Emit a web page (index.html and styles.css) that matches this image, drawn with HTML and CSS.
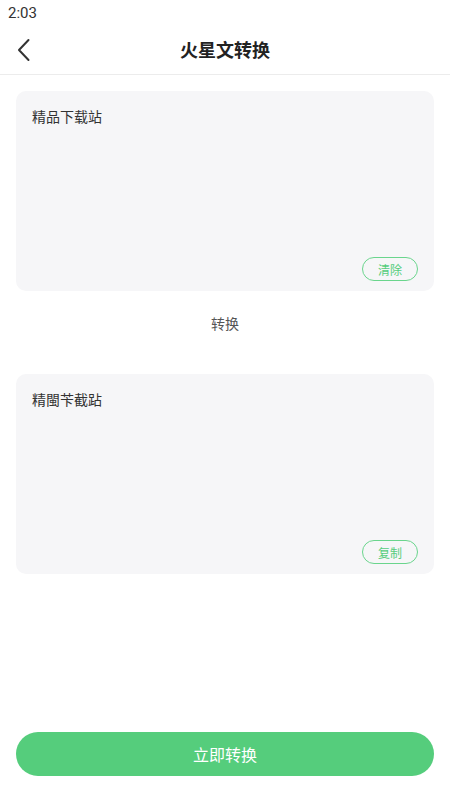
FILE: index.html
```html
<!DOCTYPE html>
<html lang="zh">
<head>
<meta charset="utf-8">
<meta name="viewport" content="width=device-width, initial-scale=1">
<title>火星文转换</title>
<link rel="stylesheet" href="styles.css">
</head>
<body>
<div class="page">
  <div class="status">2:03</div>
  <header class="nav">
    <span class="back">
      <svg width="16" height="24" viewBox="0 0 16 24"><path d="M12.5 2 L3 12 L12.5 22" fill="none" stroke="#333" stroke-width="2" stroke-linecap="round" stroke-linejoin="round"/></svg>
    </span>
    <h1 class="title">火星文转换</h1>
  </header>
  <main class="content">
    <section class="card">
      <div class="card-text">精品下载站</div>
      <button class="pill">清除</button>
    </section>
    <div class="mid">转换</div>
    <section class="card">
      <div class="card-text">精閩苄截跕</div>
      <button class="pill">复制</button>
    </section>
  </main>
  <button class="cta">立即转换</button>
</div>
</body>
</html>
```
FILE: styles.css
```css
* { box-sizing: border-box; }
html, body { margin: 0; padding: 0; background: #fff; }
body { font-family: "Noto Sans CJK SC", "Noto Sans", Roboto, sans-serif; color: #333; }
.page { display: flex; flex-direction: column; min-height: 800px; }
.status { height: 25px; padding-left: 8px; font-family: Roboto, "Noto Sans", sans-serif; font-size: 15px; line-height: 26px; color: #333; }
.nav { position: relative; height: 50px; display: flex; align-items: center; justify-content: center; border-bottom: 1px solid #ececec; }
.back { position: absolute; left: 16px; top: 13px; display: flex; }
.title { margin: 0 0 2px; font-size: 18px; font-weight: 700; color: #222; line-height: 1; }
.content { padding: 16px 16px 0; }
.card { height: 200px; background: #f6f6f8; border-radius: 10px; padding: 14px 16px 10px; display: flex; flex-direction: column; }
.card-text { font-size: 14px; line-height: 22px; color: #333; flex: 1; }
.pill { align-self: flex-end; width: 56px; height: 24px; border: 1.5px solid #6ad58d; border-radius: 12px; background: transparent; color: #55cd7c; font-family: inherit; font-size: 12px; line-height: 21px; padding: 0; }
.mid { margin: 19px 0 38px; text-align: center; font-size: 14px; line-height: 26px; color: #555; }
.cta { margin: auto 16px 24px; height: 44px; border: none; border-radius: 22px; background: #55cd7c; color: #fff; font-family: inherit; font-size: 16px; }
```
